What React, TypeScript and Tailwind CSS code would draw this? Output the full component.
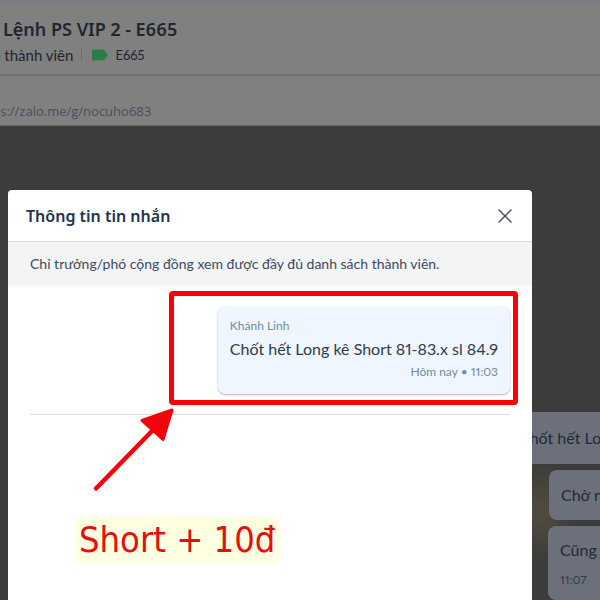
import { FC } from "react";
import { X } from "lucide-react";

const ChatHeader: FC = () => {
  return (
    <header className="bg-[#808080] border-t-4 border-[#7c7b82] text-[#202630]">
      <div className="h-[72px] pt-1 flex flex-col justify-center gap-1 border-b-2 border-[#747474] overflow-hidden">
        <h1 className="pl-[3px] text-[18px] leading-6 font-semibold whitespace-nowrap font-['Noto_Sans',sans-serif]">
          Lệnh PS VIP 2 - E665
        </h1>
        <div className="-ml-2 flex items-center text-[15px] leading-5 whitespace-nowrap">
          <span>6 thành viên</span>
          <span className="ml-2 mr-[10px] h-3 w-px bg-[#6c6c6c]" />
          <svg width="16" height="12" viewBox="0 0 16 12" aria-hidden="true">
            <path
              d="M1.500 0.500H10.500Q11.500 0.500 12.200 1.300L16 6L12.200 10.700Q11.500 11.500 10.500 11.500H1.500Q0 11.500 0 10V2Q0 0.500 1.500 0.500Z"
              fill="#2a7d44"
            />
          </svg>
          <span className="ml-[7px] text-[13px]">E665</span>
        </div>
      </div>
      <div className="h-[50px] flex items-end pb-1 border-b border-[#666666] overflow-hidden">
        <a
          href="https://zalo.me/g/nocuho683"
          className="-ml-[25px] text-[13px] leading-5 text-[#454f60] whitespace-nowrap font-['Open_Sans',sans-serif]"
        >
          https://zalo.me/g/nocuho683
        </a>
      </div>
    </header>
  );
};

const ChatMessages: FC = () => {
  return (
    <div className="flex-1 flex flex-col items-end justify-end gap-[6px] overflow-hidden bg-[radial-gradient(ellipse_34px_48px_at_540px_386px,#524d3e,#3c3c3c)] text-[16px] leading-6 text-[#232a35] whitespace-nowrap">
      <div className="w-[84px] h-[52px] flex items-center pl-[3px] bg-[#6c707a]">
        Chốt hết Lo
      </div>
      <div className="w-[51px] h-[50px] flex items-center pl-3 rounded-l-lg bg-[#6c707a] overflow-hidden">
        Chờ n
      </div>
      <div className="w-[52px] h-[74px] pl-3 pt-3 rounded-l-lg bg-[#6c707a] overflow-hidden">
        <p>Cũng</p>
        <p className="pt-2 text-[12px] leading-5 text-[#353c48]">11:07</p>
      </div>
    </div>
  );
};

const Annotations: FC = () => {
  return (
    <>
      <div className="absolute top-[101px] left-[161px] right-[14px] h-[114px] rounded-sm border-[5px] border-[#fb0007]" />
      <svg
        className="absolute top-[210px] left-[80px]"
        width="90"
        height="95"
        viewBox="88 400 90 95"
        aria-hidden="true"
      >
        <path
          d="M96 488.500L152 431"
          stroke="#f6000b"
          strokeWidth="4.500"
          strokeLinecap="round"
        />
        <path
          d="M172 410L142 420.500L163 439.500Z"
          fill="#f6000b"
          stroke="#f6000b"
          strokeWidth="3"
          strokeLinejoin="round"
        />
      </svg>
      <p className="absolute top-[327px] left-[67px] px-1 bg-[#ffffe1] text-[36px] leading-[46px] text-[#e60f0c] whitespace-nowrap font-['DejaVu_Sans_Condensed','DejaVu_Sans',sans-serif]">
        Short + 10đ
      </p>
    </>
  );
};

const MessageInfo: FC = () => {
  return (
    <section
      role="dialog"
      aria-labelledby="info-title"
      className="relative flex-1 rounded-t-[4px] bg-white"
    >
      <div className="h-[52px] pl-[18px] pr-[15px] flex items-center justify-between border-b border-[#d6dbe1]">
        <h2
          id="info-title"
          className="text-[16px] leading-6 font-semibold text-[#22344c] font-['Noto_Sans',sans-serif]"
        >
          Thông tin tin nhắn
        </h2>
        <button type="button" aria-label="Đóng" className="text-[#47505c]">
          <X size={24} strokeWidth={1.5} />
        </button>
      </div>
      <p className="px-[22px] py-3 bg-[#f3f4f6] text-[14px] leading-5 text-[#3c4a5e]">
        Chỉ trưởng/phó cộng đồng xem được đầy đủ danh sách thành viên.
      </p>
      <div className="mx-[22px] py-5 flex justify-end border-b border-[#dcdcdc]">
        <article className="px-3 py-3 rounded-lg bg-[#eff6ff] shadow-[0_1px_2px_#a9b8c6]">
          <h3 className="text-[12px] leading-4 text-[#7589a3]">Khánh Linh</h3>
          <p className="pt-[3px] text-[16px] leading-6 text-[#303c4c] whitespace-nowrap">
            Chốt hết Long kê Short 81-83.x sl 84.9
          </p>
          <p className="pt-px text-[12px] leading-5 text-right text-[#7589a3]">
            Hôm nay • 11:03
          </p>
        </article>
      </div>
      <Annotations />
    </section>
  );
};

const App: FC = () => {
  return (
    <main className="relative min-h-screen flex flex-col overflow-hidden bg-[#3c3c3c] proportional-nums font-['Lato','Noto_Sans',sans-serif]">
      <ChatHeader />
      <ChatMessages />
      <div className="absolute inset-0 pt-[190px] pl-2 pr-[68px] flex">
        <MessageInfo />
      </div>
    </main>
  );
};
export default App;
